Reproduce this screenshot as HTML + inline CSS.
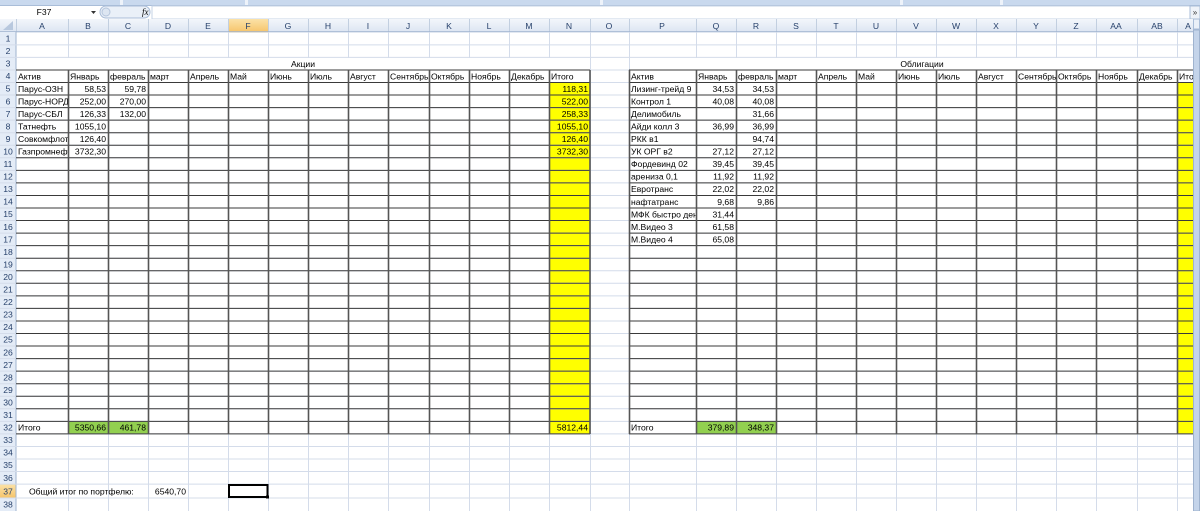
<!DOCTYPE html>
<html><head><meta charset="utf-8"><style>
html,body{margin:0;padding:0;background:#fff;width:1200px;height:511px;overflow:hidden}
svg{display:block}
text{font-family:"Liberation Sans","DejaVu Sans",sans-serif;font-size:8.6px;fill:#000}
.h{font-size:8.6px;fill:#27416b;text-anchor:middle}
.r{text-anchor:end}
</style></head><body>
<svg width="1200" height="511" viewBox="0 0 1200 511" xmlns="http://www.w3.org/2000/svg">
<defs>
<linearGradient id="ch" x1="0" y1="0" x2="0" y2="1"><stop offset="0" stop-color="#f3f6fb"/><stop offset="1" stop-color="#dce5f2"/></linearGradient>
<linearGradient id="chs" x1="0" y1="0" x2="0" y2="1"><stop offset="0" stop-color="#fbe2a8"/><stop offset="1" stop-color="#f6c46a"/></linearGradient>
<clipPath id="ca"><rect x="16" y="0" width="52" height="511"/></clipPath>
<clipPath id="cp"><rect x="629" y="0" width="66.5" height="511"/></clipPath>
<clipPath id="cac"><rect x="0" y="0" width="1193" height="511"/></clipPath>
</defs>
<rect x="0" y="0" width="1200" height="5" fill="#c9d9ee"/>
<rect x="120" y="0" width="3" height="5" fill="#eef3fa"/><rect x="245" y="0" width="3" height="5" fill="#eef3fa"/><rect x="600" y="0" width="3" height="5" fill="#eef3fa"/><rect x="900" y="0" width="3" height="5" fill="#eef3fa"/><rect x="1000" y="0" width="3" height="5" fill="#eef3fa"/>
<rect x="0" y="5" width="1200" height="14" fill="#fff"/>
<line x1="0" y1="5.5" x2="1200" y2="5.5" stroke="#a9bdd8"/>
<text x="44" y="15" class="h" style="fill:#000">F37</text>
<path d="M91 11h5l-2.5 3z" fill="#333"/>
<rect x="100" y="6" width="50" height="12" rx="6" fill="#eaf0f8" stroke="#a9bdd8"/>
<circle cx="106" cy="12" r="4" fill="#dde6f2" stroke="#b5c5dc"/>
<text x="142" y="15" style="font-style:italic;font-family:'Liberation Serif',serif;font-size:9px">fx</text>
<rect x="152" y="6" width="1038" height="13" fill="#fff" stroke="#c5d3e6"/>
<rect x="1190" y="6" width="10" height="13" fill="#eef2f8" stroke="#a9bdd8"/>
<text x="1195" y="15" class="h" style="fill:#333;font-size:8px">»</text>
<rect x="0" y="19" width="1200" height="13.3" fill="url(#ch)"/>
<rect x="228" y="19" width="40" height="13.3" fill="url(#chs)"/>
<path d="M3 30L13 21V30Z" fill="#b8c8de"/>
<path d="M16.5 19V32M68.5 19V32M108.5 19V32M148.5 19V32M188.5 19V32M228.5 19V32M268.5 19V32M308.5 19V32M348.5 19V32M388.5 19V32M429.5 19V32M469.5 19V32M509.5 19V32M549.5 19V32M590.5 19V32M629.5 19V32M696.5 19V32M736.5 19V32M776.5 19V32M816.5 19V32M856.5 19V32M896.5 19V32M936.5 19V32M976.5 19V32M1016.5 19V32M1056.5 19V32M1096.5 19V32M1137.5 19V32M1177.5 19V32" stroke="#c2cfe0"/>
<line x1="0" y1="31.8" x2="1200" y2="31.8" stroke="#9fb3cf"/>
<g>
<text x="42" y="29" class="h">A</text><text x="88" y="29" class="h">B</text><text x="128" y="29" class="h">C</text><text x="168" y="29" class="h">D</text><text x="208" y="29" class="h">E</text><text x="248" y="29" class="h">F</text><text x="288" y="29" class="h">G</text><text x="328" y="29" class="h">H</text><text x="368" y="29" class="h">I</text><text x="408" y="29" class="h">J</text><text x="449" y="29" class="h">K</text><text x="489" y="29" class="h">L</text><text x="529" y="29" class="h">M</text><text x="569" y="29" class="h">N</text><text x="609" y="29" class="h">O</text><text x="662" y="29" class="h">P</text><text x="716" y="29" class="h">Q</text><text x="756" y="29" class="h">R</text><text x="796" y="29" class="h">S</text><text x="836" y="29" class="h">T</text><text x="876" y="29" class="h">U</text><text x="916" y="29" class="h">V</text><text x="956" y="29" class="h">W</text><text x="996" y="29" class="h">X</text><text x="1036" y="29" class="h">Y</text><text x="1076" y="29" class="h">Z</text><text x="1116" y="29" class="h">AA</text><text x="1157" y="29" class="h">AB</text><text x="1188" y="29" class="h">A</text>
</g>
<rect x="0" y="32" width="16" height="479" fill="#e4ecf7"/>
<rect x="0" y="484.1" width="16" height="13.9" fill="url(#chs)"/>
<line x1="16" y1="32" x2="16" y2="511" stroke="#9fb3cf"/>
<rect x="549" y="82.5" width="41" height="351.4" fill="#ffff00"/>
<rect x="1177" y="82.5" width="16" height="351.4" fill="#ffff00"/>
<rect x="68" y="421.35" width="80" height="12.55" fill="#92d050"/>
<rect x="696" y="421.35" width="80" height="12.55" fill="#92d050"/>
<g clip-path="url(#cac)">
<path d="M0 44.85H1193M0 57.4H1193M0 69.95H1193M0 82.5H1193M0 95.05H1193M0 107.6H1193M0 120.15H1193M0 132.7H1193M0 145.25H1193M0 157.8H1193M0 170.35H1193M0 182.9H1193M0 195.45H1193M0 208H1193M0 220.55H1193M0 233.1H1193M0 245.65H1193M0 258.2H1193M0 270.75H1193M0 283.3H1193M0 295.85H1193M0 308.4H1193M0 320.95H1193M0 333.5H1193M0 346.05H1193M0 358.6H1193M0 371.15H1193M0 383.7H1193M0 396.25H1193M0 408.8H1193M0 421.35H1193M0 433.9H1193M0 446.45H1193M0 459H1193M0 471.55H1193M0 484.1H1193M0 498H1193" stroke="#d4dcea" stroke-width="1"/>
<path d="M68.5 32V511M108.5 32V511M148.5 32V511M188.5 32V511M228.5 32V511M268.5 32V511M308.5 32V511M348.5 32V511M388.5 32V511M429.5 32V511M469.5 32V511M509.5 32V511M549.5 32V511M590.5 32V511M629.5 32V511M696.5 32V511M736.5 32V511M776.5 32V511M816.5 32V511M856.5 32V511M896.5 32V511M936.5 32V511M976.5 32V511M1016.5 32V511M1056.5 32V511M1096.5 32V511M1137.5 32V511M1177.5 32V511" stroke="#d4dcea" stroke-width="1"/>
</g>
<rect x="17" y="58" width="573" height="11.5" fill="#fff"/>
<rect x="630.5" y="58" width="562.5" height="11.5" fill="#fff"/>
<path d="M16 69.95H590M16 82.5H590M16 95.05H590M16 107.6H590M16 120.15H590M16 132.7H590M16 145.25H590M16 157.8H590M16 170.35H590M16 182.9H590M16 195.45H590M16 208H590M16 220.55H590M16 233.1H590M16 245.65H590M16 258.2H590M16 270.75H590M16 283.3H590M16 295.85H590M16 308.4H590M16 320.95H590M16 333.5H590M16 346.05H590M16 358.6H590M16 371.15H590M16 383.7H590M16 396.25H590M16 408.8H590M16 421.35H590M16 433.9H590" stroke="#3a3a3a" stroke-width="1"/>
<path d="M68.5 70V434M108.5 70V434M148.5 70V434M188.5 70V434M228.5 70V434M268.5 70V434M308.5 70V434M348.5 70V434M388.5 70V434M429.5 70V434M469.5 70V434M509.5 70V434M549.5 70V434M590 70V434" stroke="#555" stroke-width="1.6"/>
<path d="M629 69.95H1193M629 82.5H1193M629 95.05H1193M629 107.6H1193M629 120.15H1193M629 132.7H1193M629 145.25H1193M629 157.8H1193M629 170.35H1193M629 182.9H1193M629 195.45H1193M629 208H1193M629 220.55H1193M629 233.1H1193M629 245.65H1193M629 258.2H1193M629 270.75H1193M629 283.3H1193M629 295.85H1193M629 308.4H1193M629 320.95H1193M629 333.5H1193M629 346.05H1193M629 358.6H1193M629 371.15H1193M629 383.7H1193M629 396.25H1193M629 408.8H1193M629 421.35H1193M629 433.9H1193" stroke="#3a3a3a" stroke-width="1"/>
<path d="M629.5 70V434M696.5 70V434M736.5 70V434M776.5 70V434M816.5 70V434M856.5 70V434M896.5 70V434M936.5 70V434M976.5 70V434M1016.5 70V434M1056.5 70V434M1096.5 70V434M1137.5 70V434M1177.5 70V434" stroke="#555" stroke-width="1.6"/>
<g>
<text x="8" y="41.5" class="h">1</text><text x="8" y="54" class="h">2</text><text x="8" y="66.6" class="h">3</text><text x="8" y="79.2" class="h">4</text><text x="8" y="91.7" class="h">5</text><text x="8" y="104.3" class="h">6</text><text x="8" y="116.8" class="h">7</text><text x="8" y="129.4" class="h">8</text><text x="8" y="141.9" class="h">9</text><text x="8" y="154.5" class="h">10</text><text x="8" y="167" class="h">11</text><text x="8" y="179.6" class="h">12</text><text x="8" y="192.1" class="h">13</text><text x="8" y="204.7" class="h">14</text><text x="8" y="217.2" class="h">15</text><text x="8" y="229.8" class="h">16</text><text x="8" y="242.3" class="h">17</text><text x="8" y="254.9" class="h">18</text><text x="8" y="267.4" class="h">19</text><text x="8" y="280" class="h">20</text><text x="8" y="292.5" class="h">21</text><text x="8" y="305.1" class="h">22</text><text x="8" y="317.6" class="h">23</text><text x="8" y="330.2" class="h">24</text><text x="8" y="342.7" class="h">25</text><text x="8" y="355.3" class="h">26</text><text x="8" y="367.8" class="h">27</text><text x="8" y="380.4" class="h">28</text><text x="8" y="392.9" class="h">29</text><text x="8" y="405.5" class="h">30</text><text x="8" y="418" class="h">31</text><text x="8" y="430.6" class="h">32</text><text x="8" y="443.1" class="h">33</text><text x="8" y="455.7" class="h">34</text><text x="8" y="468.2" class="h">35</text><text x="8" y="480.8" class="h">36</text><text x="8" y="494.5" class="h">37</text><text x="8" y="507.5" class="h">38</text>
</g>
<text x="303" y="66.8" style="text-anchor:middle">Акции</text>
<text x="922" y="66.8" style="text-anchor:middle">Облигации</text>
<g>
<text x="18" y="79.3">Актив</text><text x="70" y="79.3">Январь</text><text x="110" y="79.3">февраль</text><text x="150" y="79.3">март</text><text x="190" y="79.3">Апрель</text><text x="230" y="79.3">Май</text><text x="270" y="79.3">Июнь</text><text x="310" y="79.3">Июль</text><text x="350" y="79.3">Август</text><text x="390" y="79.3">Сентябрь</text><text x="431" y="79.3">Октябрь</text><text x="471" y="79.3">Ноябрь</text><text x="511" y="79.3">Декабрь</text><text x="551" y="79.3">Итого</text>
</g>
<g clip-path="url(#ca)">
<text x="18" y="91.8">Парус-ОЗН</text><text x="18" y="104.4">Парус-НОРД</text><text x="18" y="116.9">Парус-СБЛ</text><text x="18" y="129.5">Татнефть</text><text x="18" y="142">Совкомфлот</text><text x="18" y="154.6">Газпромнефть</text>
<text x="18" y="430.7">Итого</text>
</g>
<g>
<text x="106" y="91.8" class="r">58,53</text><text x="106" y="104.4" class="r">252,00</text><text x="106" y="116.9" class="r">126,33</text><text x="106" y="129.5" class="r">1055,10</text><text x="106" y="142" class="r">126,40</text><text x="106" y="154.6" class="r">3732,30</text>
<text x="146" y="91.8" class="r">59,78</text><text x="146" y="104.4" class="r">270,00</text><text x="146" y="116.9" class="r">132,00</text>
<text x="588" y="91.8" class="r">118,31</text><text x="588" y="104.4" class="r">522,00</text><text x="588" y="116.9" class="r">258,33</text><text x="588" y="129.5" class="r">1055,10</text><text x="588" y="142" class="r">126,40</text><text x="588" y="154.6" class="r">3732,30</text>
<text x="106" y="430.7" class="r">5350,66</text><text x="146" y="430.7" class="r">461,78</text><text x="588" y="430.7" class="r">5812,44</text>
</g>
<g clip-path="url(#cac)">
<text x="631" y="79.3">Актив</text><text x="698" y="79.3">Январь</text><text x="738" y="79.3">февраль</text><text x="778" y="79.3">март</text><text x="818" y="79.3">Апрель</text><text x="858" y="79.3">Май</text><text x="898" y="79.3">Июнь</text><text x="938" y="79.3">Июль</text><text x="978" y="79.3">Август</text><text x="1018" y="79.3">Сентябрь</text><text x="1058" y="79.3">Октябрь</text><text x="1098" y="79.3">Ноябрь</text><text x="1139" y="79.3">Декабрь</text><text x="1179" y="79.3">Итого</text>
</g>
<g clip-path="url(#cp)">
<text x="631" y="91.8">Лизинг-трейд 9</text><text x="631" y="104.4">Контрол 1</text><text x="631" y="116.9">Делимобиль</text><text x="631" y="129.5">Айди колл 3</text><text x="631" y="142">РКК в1</text><text x="631" y="154.6">УК ОРГ в2</text><text x="631" y="167.1">Фордевинд 02</text><text x="631" y="179.7">арениза 0,1</text><text x="631" y="192.2">Евротранс</text><text x="631" y="204.8">нафтатранс</text><text x="631" y="217.3">МФК быстро деньги</text><text x="631" y="229.9">М.Видео 3</text><text x="631" y="242.4">М.Видео 4</text>
<text x="631" y="430.7">Итого</text>
</g>
<g>
<text x="734" y="91.8" class="r">34,53</text><text x="734" y="104.4" class="r">40,08</text><text x="734" y="129.5" class="r">36,99</text><text x="734" y="154.6" class="r">27,12</text><text x="734" y="167.1" class="r">39,45</text><text x="734" y="179.7" class="r">11,92</text><text x="734" y="192.2" class="r">22,02</text><text x="734" y="204.8" class="r">9,68</text><text x="734" y="217.3" class="r">31,44</text><text x="734" y="229.9" class="r">61,58</text><text x="734" y="242.4" class="r">65,08</text>
<text x="774" y="91.8" class="r">34,53</text><text x="774" y="104.4" class="r">40,08</text><text x="774" y="116.9" class="r">31,66</text><text x="774" y="129.5" class="r">36,99</text><text x="774" y="142" class="r">94,74</text><text x="774" y="154.6" class="r">27,12</text><text x="774" y="167.1" class="r">39,45</text><text x="774" y="179.7" class="r">11,92</text><text x="774" y="192.2" class="r">22,02</text><text x="774" y="204.8" class="r">9,86</text>
<text x="734" y="430.7" class="r">379,89</text><text x="774" y="430.7" class="r">348,37</text>
</g>
<text x="29" y="494.5">Общий итог по портфелю:</text>
<text x="186" y="494.5" class="r">6540,70</text>
<rect x="229" y="485" width="38.5" height="12" fill="none" stroke="#000" stroke-width="2"/>
<rect x="266" y="495.5" width="3" height="3" fill="#000"/>
<rect x="1193" y="19" width="7" height="492" fill="#d6e2f2"/>
<rect x="1193.5" y="19" width="6" height="10" fill="#eaf0f8" stroke="#a9bdd8"/>
<rect x="1193.5" y="30" width="6" height="481" fill="#c4d4ea" stroke="#9fb3cf"/>
</svg>
</body></html>
